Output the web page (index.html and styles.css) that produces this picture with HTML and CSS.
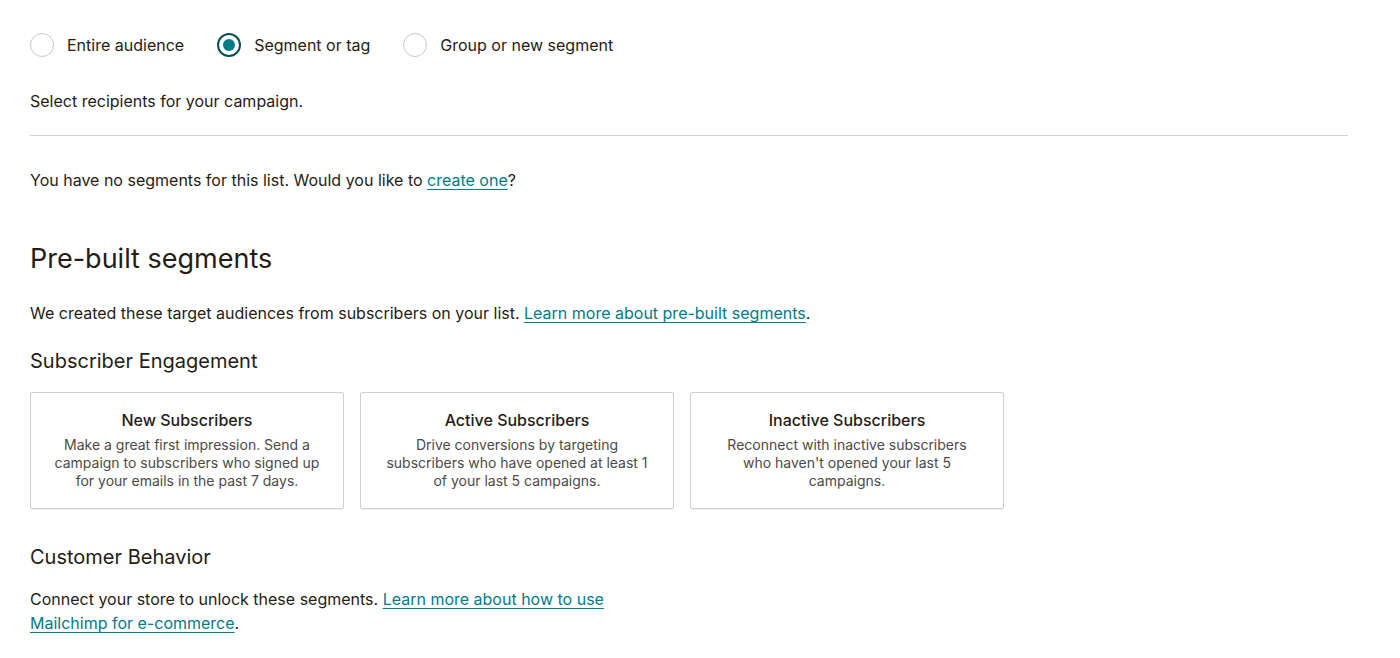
FILE: index.html
```html
<!DOCTYPE html>
<html lang="en">
<head>
<meta charset="utf-8">
<title>Recipients</title>
<link rel="stylesheet" href="styles.css">
</head>
<body>
<main class="page">
  <div class="radios">
    <label class="radio"><span class="dot"></span><span class="radio-label">Entire audience</span></label>
    <label class="radio"><span class="dot checked"></span><span class="radio-label">Segment or tag</span></label>
    <label class="radio"><span class="dot"></span><span class="radio-label">Group or new segment</span></label>
  </div>
  <p class="hint">Select recipients for your campaign.</p>
  <hr class="rule">
  <p class="nosegs">You have no segments for this list. Would you like to <a href="#">create one</a>?</p>

  <h1 class="title">Pre-built segments</h1>
  <p class="intro">We created these target audiences from subscribers on your list. <a href="#">Learn more about pre-built segments</a>.</p>

  <h2 class="subtitle">Subscriber Engagement</h2>
  <div class="cards">
    <div class="card">
      <h3 class="card-title">New Subscribers</h3>
      <p class="card-text">Make a great first impression. Send a campaign to subscribers who signed up for your emails in the past 7 days.</p>
    </div>
    <div class="card">
      <h3 class="card-title">Active Subscribers</h3>
      <p class="card-text">Drive conversions by targeting subscribers who have opened at least 1 of your last 5 campaigns.</p>
    </div>
    <div class="card">
      <h3 class="card-title">Inactive Subscribers</h3>
      <p class="card-text">Reconnect with inactive subscribers who haven't opened your last 5 campaigns.</p>
    </div>
  </div>

  <h2 class="subtitle behavior">Customer Behavior</h2>
  <p class="connect">Connect your store to unlock these segments. <a href="#">Learn more about how to use</a><br><a href="#">Mailchimp for e-commerce</a>.</p>
</main>
</body>
</html>
```

FILE: styles.css
```css
* { box-sizing: border-box; }
html, body { margin: 0; padding: 0; background: #fff; }
body {
  font-family: "Inter", "Liberation Sans", sans-serif;
  color: #241c15;
  font-size: 16px;
  line-height: 24px;
}
.page {
  padding: 32px 52px 0 30px;
}
a {
  color: #007c89;
  text-decoration: underline;
  text-underline-offset: 3px;
  text-decoration-thickness: 1px;
}
.radios {
  display: flex;
  align-items: center;
  height: 26px;
}
.radio {
  display: flex;
  align-items: center;
  margin-right: 33px;
}
.dot {
  width: 24px;
  height: 24px;
  border-radius: 50%;
  border: 1px solid #c8c8c8;
  margin-right: 13px;
  position: relative;
  flex: none;
}
.dot.checked {
  border: 2px solid #0b4f56;
}
.dot.checked::after {
  content: "";
  position: absolute;
  left: 4px;
  top: 4px;
  width: 12px;
  height: 12px;
  border-radius: 50%;
  background: #007c89;
}
.radio-label { font-size: 16px; }
.hint {
  margin: 31px 0 0;
}
.rule {
  border: 0;
  border-top: 1px solid #d3d3d3;
  margin: 22px 0 0;
}
.nosegs {
  margin: 32px 0 0;
}
.title {
  font-size: 27px;
  font-weight: 400;
  line-height: 36px;
  margin: 49px 0 0;
}
.intro {
  margin: 24px 0 0;
}
.subtitle {
  font-size: 20px;
  font-weight: 400;
  line-height: 28px;
  margin: 22px 0 0;
}
.cards {
  display: flex;
  gap: 16px;
  margin-top: 17px;
}
.card {
  width: 314px;
  height: 117px;
  border: 1px solid #cfcfcf;
  border-radius: 2px;
  box-shadow: 0 1px 1px rgba(0,0,0,0.06);
  padding: 16px 22px 0;
  text-align: center;
}
.card-title {
  font-size: 16px;
  font-weight: 500;
  line-height: 22px;
  margin: 0;
}
.card-text {
  font-size: 14px;
  line-height: 18px;
  color: #4d4a47;
  margin: 5px 0 0;
}
.behavior {
  margin-top: 34px;
}
.connect {
  margin: 16px 0 0;
}
```
